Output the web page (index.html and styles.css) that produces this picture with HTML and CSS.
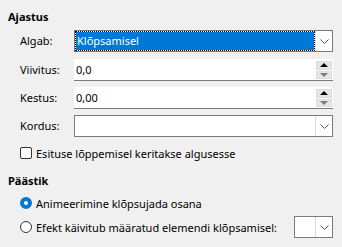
FILE: index.html
```html
<!DOCTYPE html>
<html lang="et">
<head>
    <meta charset="UTF-8">
    <title>Ajastus</title>
    <link rel="stylesheet" href="styles.css">
</head>
<body>
    <div class="panel">
        <h2 class="section-title">Ajastus</h2>
        <div class="form-grid">
            <span class="field-label">Algab:</span>
            <div class="combo">
                <div class="combo-value selected"><span>Klõpsamisel</span></div>
                <div class="combo-btn">
                    <svg width="9" height="5" viewBox="0 0 9 5"><path d="M0.5 0.5 L4.5 4.5 L8.5 0.5" fill="none" stroke="#555" stroke-width="1"/></svg>
                </div>
            </div>

            <span class="field-label">Viivitus:</span>
            <div class="spin">
                <div class="spin-value">0,0</div>
                <div class="spin-btns">
                    <div class="spin-btn"><span class="arrow-up"></span></div>
                    <div class="spin-btn"><span class="arrow-down"></span></div>
                </div>
            </div>

            <span class="field-label">Kestus:</span>
            <div class="spin">
                <div class="spin-value">0,00</div>
                <div class="spin-btns">
                    <div class="spin-btn"><span class="arrow-up"></span></div>
                    <div class="spin-btn"><span class="arrow-down"></span></div>
                </div>
            </div>

            <span class="field-label">Kordus:</span>
            <div class="combo">
                <div class="combo-value"></div>
                <div class="combo-btn">
                    <svg width="9" height="5" viewBox="0 0 9 5"><path d="M0.5 0.5 L4.5 4.5 L8.5 0.5" fill="none" stroke="#555" stroke-width="1"/></svg>
                </div>
            </div>
        </div>

        <div class="check-row">
            <span class="checkbox"></span>
            <span>Esituse lõppemisel keritakse algusesse</span>
        </div>

        <h2 class="section-title second">Päästik</h2>
        <div class="radio-row first">
            <span class="radio checked"></span>
            <span>Animeerimine klõpsujada osana</span>
        </div>
        <div class="radio-row">
            <span class="radio"></span>
            <span>Efekt käivitub määratud elemendi klõpsamisel:</span>
            <div class="combo small">
                <div class="combo-value"></div>
                <div class="combo-btn">
                    <svg width="9" height="5" viewBox="0 0 9 5"><path d="M0.5 0.5 L4.5 4.5 L8.5 0.5" fill="none" stroke="#555" stroke-width="1"/></svg>
                </div>
            </div>
        </div>
    </div>
</body>
</html>
```

FILE: styles.css
```css
body {
    margin: 0;
    background-color: #f0f0f0;
    font-family: "Noto Sans", sans-serif;
    font-size: 11px;
    line-height: 15px;
    color: #000;
}

.panel {
    padding: 9px 9px 0 8px;
}

.section-title {
    margin: 0;
    font-size: 11px;
    font-weight: bold;
    line-height: 16px;
}

.section-title.second {
    margin-top: 13px;
}

.form-grid {
    display: grid;
    grid-template-columns: 54px 259px;
    grid-template-rows: 23px repeat(3, 22px);
    row-gap: 6px;
    margin-top: 5px;
    margin-left: 12px;
    align-items: start;
}

.field-label {
    line-height: 22px;
}

/* combobox */
.combo {
    display: flex;
    height: 22px;
    box-sizing: border-box;
    border: 1px solid #7a7a7a;
    background: #fff;
}

.combo-value {
    flex: 1;
    padding-left: 2px;
    line-height: 20px;
}

.combo-value.selected {
    padding: 0;
    background: #fff;
}

.combo-value.selected span {
    display: block;
    height: 20px;
    box-sizing: border-box;
    border: 1px dotted #000;
    background-color: #0078d7;
    background-clip: padding-box;
    color: #fff;
    padding-left: 1px;
    line-height: 18px;
}

.combo-btn {
    width: 16px;
    border-left: 1px solid #d9d9d9;
    display: flex;
    align-items: center;
    justify-content: center;
}

.combo.small {
    width: 39px;
    margin-left: auto;
}

/* spin field */
.spin {
    display: flex;
    height: 22px;
    box-sizing: border-box;
    background: #fff;
    border-bottom: 1px solid #7a7a7a;
}

.spin-value {
    flex: 1;
    padding-left: 2px;
    line-height: 21px;
}

.spin-btns {
    display: flex;
    flex-direction: column;
    gap: 1px;
    padding: 2px 1px 1px 0;
}

.spin-btn {
    width: 14px;
    height: 8px;
    border: 1px solid #dcdcdc;
    background: #e5e5e5;
    display: flex;
    align-items: center;
    justify-content: center;
}

.arrow-up {
    width: 0;
    height: 0;
    border-left: 4px solid transparent;
    border-right: 4px solid transparent;
    border-bottom: 4px solid #000;
}

.arrow-down {
    width: 0;
    height: 0;
    border-left: 4px solid transparent;
    border-right: 4px solid transparent;
    border-top: 4px solid #7a7a7a;
}

/* checkbox and radio rows */
.check-row,
.radio-row {
    display: flex;
    align-items: center;
    margin-left: 12px;
}

.check-row {
    height: 14px;
    margin-top: 9px;
}

.checkbox {
    width: 10px;
    height: 10px;
    border: 1px solid #333;
    border-radius: 2px;
    background: #fff;
    margin-right: 4px;
}

.radio-row {
    height: 22px;
    margin-top: 2px;
}

.radio-row.first {
    margin-top: 3px;
}

.radio {
    width: 10px;
    height: 10px;
    border: 1px solid #333;
    border-radius: 50%;
    background: #fff;
    margin-right: 4px;
}

.radio.checked {
    width: 4px;
    height: 4px;
    border: 4px solid #0078d7;
}
```
